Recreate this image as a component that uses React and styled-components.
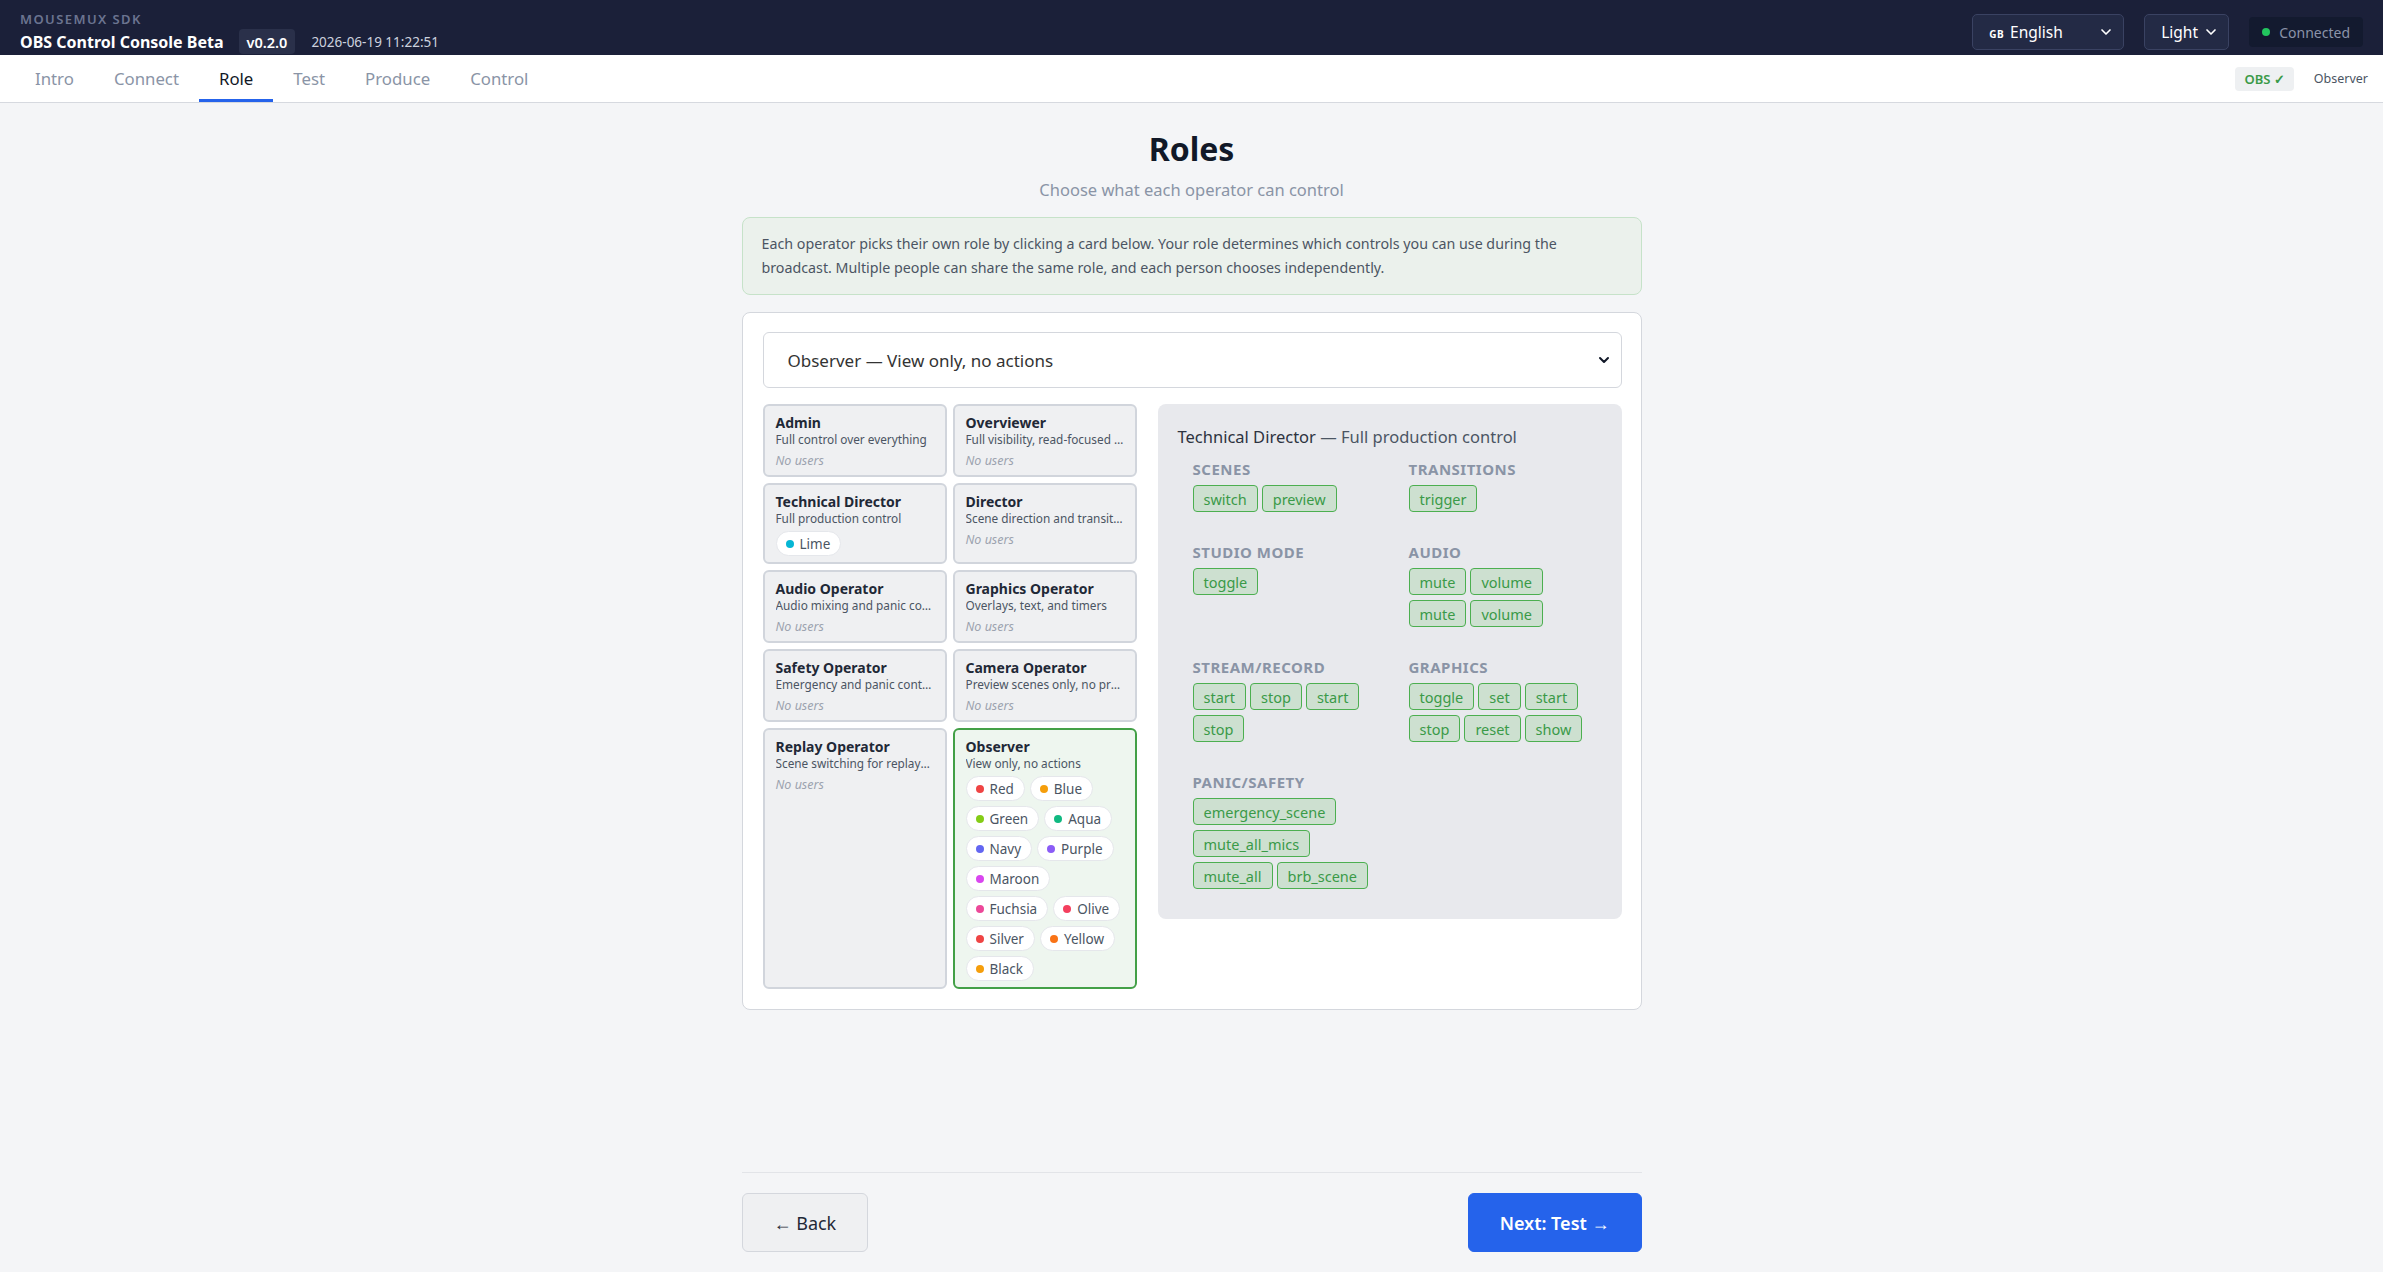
import React from "react";
import styled, { createGlobalStyle } from "styled-components";
import { ChevronDown } from "lucide-react";

const GlobalStyle = createGlobalStyle`
  html, body {
    margin: 0;
    padding: 0;
    background: #f4f5f7;
    font-family: "Noto Sans", "Open Sans", sans-serif;
    color: #1f2937;
  }
  * { box-sizing: border-box; }
`;

const Page = styled.div`
  min-height: 100vh;
  display: flex;
  flex-direction: column;
`;

const Header = styled.header`
  height: 55px;
  background: #1b2039;
  display: flex;
  justify-content: space-between;
  align-items: flex-start;
  padding: 10px 20px 0 20px;
`;

const Brand = styled.div`
  display: flex;
  flex-direction: column;
`;

const SdkLabel = styled.div`
  font-size: 13px;
  line-height: 18px;
  font-weight: 600;
  letter-spacing: 1.4px;
  color: #6b7490;
`;

const TitleRow = styled.div`
  display: flex;
  align-items: center;
  height: 27px;
`;

const AppTitle = styled.div`
  font-size: 16px;
  font-weight: 700;
  color: #ffffff;
`;

const Version = styled.span`
  margin-left: 15px;
  height: 25px;
  padding: 0 8px;
  display: flex;
  align-items: center;
  background: #2a304a;
  border-radius: 4px;
  color: #ffffff;
  font-size: 14.5px;
  font-weight: 600;
`;

const Clock = styled.span`
  margin-left: 16px;
  font-size: 13.5px;
  color: #cdd2df;
`;

const HeaderRight = styled.div`
  display: flex;
  align-items: center;
  gap: 20px;
  margin-top: 4px;
`;

const DarkSelect = styled.button`
  height: 36px;
  width: ${(p) => p.$w}px;
  display: flex;
  align-items: center;
  justify-content: space-between;
  padding: 0 9px 0 16px;
  background: #232a45;
  border: 1px solid #3a4262;
  border-radius: 5px;
  color: #ffffff;
  font-family: inherit;
  font-size: 15.5px;
`;

const Flag = styled.span`
  font-size: 10px;
  font-weight: 700;
  margin-right: 6px;
  letter-spacing: 0.5px;
`;

const Status = styled.div`
  height: 30px;
  display: flex;
  align-items: center;
  gap: 9px;
  padding: 0 13px;
  background: #131a2f;
  border-radius: 4px;
  color: #8b93a8;
  font-size: 14px;
`;

const Dot = styled.span`
  width: ${(p) => p.$size || 8}px;
  height: ${(p) => p.$size || 8}px;
  border-radius: 50%;
  background: ${(p) => p.$color};
  flex-shrink: 0;
`;

const TabBar = styled.nav`
  height: 48px;
  background: #ffffff;
  border-bottom: 1px solid #d6d9df;
  display: flex;
  justify-content: space-between;
  align-items: stretch;
  padding: 0 15px;
`;

const Tabs = styled.div`
  display: flex;
`;

const Tab = styled.div`
  padding: 0 20px;
  display: flex;
  align-items: center;
  font-size: 16.8px;
  color: ${(p) => (p.$active ? "#111827" : "#8a94a6")};
  border-bottom: 3px solid ${(p) => (p.$active ? "#2563eb" : "transparent")};
  border-top: 3px solid transparent;
`;

const TabMeta = styled.div`
  display: flex;
  align-items: center;
  gap: 20px;
`;

const ObsBadge = styled.span`
  height: 24px;
  padding: 0 9px;
  display: flex;
  align-items: center;
  background: #eef0f2;
  border-radius: 4px;
  color: #3a9a48;
  font-size: 13px;
  font-weight: 600;
`;

const UserRole = styled.span`
  font-size: 12.5px;
  color: #4b5563;
`;

const Main = styled.main`
  flex: 1;
  display: flex;
  flex-direction: column;
  padding: 26px 0 20px;
`;

const Container = styled.div`
  width: 900px;
  margin: 0 auto;
  flex: 1;
  display: flex;
  flex-direction: column;
`;

const Heading = styled.h1`
  margin: 0;
  text-align: center;
  font-size: 32px;
  line-height: 40px;
  font-weight: 700;
  color: #111827;
`;

const Subtitle = styled.p`
  margin: 10px 0 16px;
  text-align: center;
  font-size: 16.5px;
  line-height: 22px;
  color: #8a94a6;
`;

const InfoBox = styled.div`
  background: #ebf1ec;
  border: 1px solid #c6e2c9;
  border-radius: 8px;
  padding: 14px 34px 14px 19px;
  font-size: 14.25px;
  line-height: 24px;
  color: #4b5563;
`;

const Panel = styled.section`
  margin-top: 17px;
  background: #ffffff;
  border: 1px solid #d4d7dd;
  border-radius: 8px;
  padding: 19px 19px 20px 20px;
`;

const SelectWrap = styled.div`
  position: relative;
  margin-bottom: 16px;
`;

const RoleSelect = styled.select`
  width: 100%;
  height: 56px;
  appearance: none;
  background: #ffffff;
  border: 1px solid #d4d7dd;
  border-radius: 6px;
  padding: 0 40px 0 24px;
  font-family: inherit;
  font-size: 17px;
  color: #333333;
`;

const SelectIcon = styled.span`
  position: absolute;
  right: 10px;
  top: 50%;
  transform: translateY(-50%);
  display: flex;
  color: #111827;
  pointer-events: none;
`;

const Split = styled.div`
  display: grid;
  grid-template-columns: 374px 1fr;
  column-gap: 21px;
  align-items: start;
`;

const CardGrid = styled.div`
  display: grid;
  grid-template-columns: 184px 184px;
  gap: 6px;
`;

const RoleCard = styled.div`
  background: ${(p) => (p.$selected ? "#eef6ef" : "#eff0f2")};
  border: 2px solid ${(p) => (p.$selected ? "#43a047" : "#d1d5dc")};
  border-radius: 6px;
  padding: 8px 10px 6px 11px;
  min-width: 0;
`;

const CardTitle = styled.div`
  font-size: 14px;
  line-height: 17px;
  font-weight: 700;
  color: #1f2937;
`;

const CardDesc = styled.div`
  font-size: 11.8px;
  line-height: 17px;
  color: #4b5563;
  white-space: nowrap;
  overflow: hidden;
  text-overflow: ellipsis;
`;

const NoUsers = styled.div`
  margin-top: 4px;
  font-size: 12.5px;
  line-height: 17px;
  font-style: italic;
  color: #9ca3af;
`;

const Chips = styled.div`
  margin-top: 4px;
  display: flex;
  flex-wrap: wrap;
  gap: 5px;
`;

const Chip = styled.span`
  height: 25px;
  display: inline-flex;
  align-items: center;
  gap: 6px;
  padding: 0 10px 0 9px;
  background: #ffffff;
  border: 1px solid #e5e7eb;
  border-radius: 999px;
  font-size: 13.5px;
  color: #4b5563;
`;

const Perms = styled.div`
  background: #e8e9ed;
  border-radius: 8px;
  padding: 20px 20px 30px 20px;
`;

const PermsTitle = styled.div`
  font-size: 16.5px;
  line-height: 26px;
  color: #4b5563;
  margin-bottom: 9px;
  span {
    color: #2d3340;
  }
`;

const PermGrid = styled.div`
  display: grid;
  grid-template-columns: 180px 180px;
  column-gap: 36px;
  row-gap: 30px;
  margin-left: 15px;
`;

const Group = styled.div``;

const GroupTitle = styled.div`
  font-size: 15px;
  line-height: 20px;
  font-weight: 700;
  letter-spacing: 0.5px;
  color: #8a94a6;
  margin-bottom: 6px;
`;

const Actions = styled.div`
  display: flex;
  flex-wrap: wrap;
  gap: 5px 4px;
`;

const Action = styled.span`
  height: 27px;
  display: inline-flex;
  align-items: center;
  padding: 0 10px;
  background: #cde0d0;
  border: 1px solid #4caf50;
  border-radius: 4px;
  font-size: 14.5px;
  color: #3a9a48;
`;

const Footer = styled.div`
  margin-top: auto;
  border-top: 1px solid #e2e4e8;
  padding-top: 20px;
  display: flex;
  justify-content: space-between;
`;

const NavButton = styled.button`
  height: 59px;
  padding: 0 31px;
  border-radius: 6px;
  font-family: inherit;
  font-size: 18px;
  font-weight: ${(p) => (p.$primary ? 600 : 400)};
  background: ${(p) => (p.$primary ? "#2563eb" : "#eff0f2")};
  color: ${(p) => (p.$primary ? "#ffffff" : "#1f2937")};
  border: 1px solid ${(p) => (p.$primary ? "#2563eb" : "#d4d7dd")};
`;

const observers = [
  ["Red", "#ef4444"],
  ["Blue", "#f59e0b"],
  ["Green", "#84cc16"],
  ["Aqua", "#10b981"],
  ["Navy", "#6366f1"],
  ["Purple", "#8b5cf6"],
  ["Maroon", "#d946ef"],
  ["Fuchsia", "#ec4899"],
  ["Olive", "#f43f5e"],
  ["Silver", "#ef4444"],
  ["Yellow", "#f97316"],
  ["Black", "#f59e0b"],
];

const roles = [
  { name: "Admin", desc: "Full control over everything", users: [] },
  { name: "Overviewer", desc: "Full visibility, read-focused monitoring", users: [] },
  { name: "Technical Director", desc: "Full production control", users: [["Lime", "#06b6d4"]] },
  { name: "Director", desc: "Scene direction and transitions", users: [] },
  { name: "Audio Operator", desc: "Audio mixing and panic controls", users: [] },
  { name: "Graphics Operator", desc: "Overlays, text, and timers", users: [] },
  { name: "Safety Operator", desc: "Emergency and panic controls", users: [] },
  { name: "Camera Operator", desc: "Preview scenes only, no program", users: [] },
  { name: "Replay Operator", desc: "Scene switching for replays/highlights", users: [] },
  { name: "Observer", desc: "View only, no actions", users: observers, selected: true },
];

const permissions = [
  { title: "Scenes", actions: ["switch", "preview"] },
  { title: "Transitions", actions: ["trigger"] },
  { title: "Studio Mode", actions: ["toggle"] },
  { title: "Audio", actions: ["mute", "volume", "mute", "volume"] },
  { title: "Stream/Record", actions: ["start", "stop", "start", "stop"] },
  { title: "Graphics", actions: ["toggle", "set", "start", "stop", "reset", "show"] },
  { title: "Panic/Safety", actions: ["emergency_scene", "mute_all_mics", "mute_all", "brb_scene"] },
];

const tabs = ["Intro", "Connect", "Role", "Test", "Produce", "Control"];

const App = () => {
  return (
    <Page>
      <GlobalStyle />
      <Header>
        <Brand>
          <SdkLabel>MOUSEMUX SDK</SdkLabel>
          <TitleRow>
            <AppTitle>OBS Control Console Beta</AppTitle>
            <Version>v0.2.0</Version>
            <Clock>2026-06-19 11:22:51</Clock>
          </TitleRow>
        </Brand>
        <HeaderRight>
          <DarkSelect $w={152}>
            <span>
              <Flag>GB</Flag>English
            </span>
            <ChevronDown size={16} strokeWidth={2.5} />
          </DarkSelect>
          <DarkSelect $w={85}>
            <span>Light</span>
            <ChevronDown size={16} strokeWidth={2.5} />
          </DarkSelect>
          <Status>
            <Dot $color="#22c55e" />
            Connected
          </Status>
        </HeaderRight>
      </Header>

      <TabBar>
        <Tabs>
          {tabs.map((t) => (
            <Tab key={t} $active={t === "Role"}>
              {t}
            </Tab>
          ))}
        </Tabs>
        <TabMeta>
          <ObsBadge>OBS ✓</ObsBadge>
          <UserRole>Observer</UserRole>
        </TabMeta>
      </TabBar>

      <Main>
        <Container>
          <Heading>Roles</Heading>
          <Subtitle>Choose what each operator can control</Subtitle>
          <InfoBox>
            Each operator picks their own role by clicking a card below. Your role determines which controls you can
            use during the broadcast. Multiple people can share the same role, and each person chooses independently.
          </InfoBox>

          <Panel>
            <SelectWrap>
              <RoleSelect defaultValue="Observer">
                {roles.map((r) => (
                  <option key={r.name} value={r.name}>
                    {r.name} — {r.desc}
                  </option>
                ))}
              </RoleSelect>
              <SelectIcon>
                <ChevronDown size={16} strokeWidth={3} />
              </SelectIcon>
            </SelectWrap>

            <Split>
              <CardGrid>
                {roles.map((r) => (
                  <RoleCard key={r.name} $selected={r.selected}>
                    <CardTitle>{r.name}</CardTitle>
                    <CardDesc>{r.desc}</CardDesc>
                    {r.users.length === 0 ? (
                      <NoUsers>No users</NoUsers>
                    ) : (
                      <Chips>
                        {r.users.map(([n, c]) => (
                          <Chip key={n}>
                            <Dot $color={c} $size={8} />
                            {n}
                          </Chip>
                        ))}
                      </Chips>
                    )}
                  </RoleCard>
                ))}
              </CardGrid>

              <Perms>
                <PermsTitle>
                  <span>Technical Director</span> — Full production control
                </PermsTitle>
                <PermGrid>
                  {permissions.map((g) => (
                    <Group key={g.title}>
                      <GroupTitle>{g.title.toUpperCase()}</GroupTitle>
                      <Actions>
                        {g.actions.map((a, i) => (
                          <Action key={a + i}>{a}</Action>
                        ))}
                      </Actions>
                    </Group>
                  ))}
                </PermGrid>
              </Perms>
            </Split>
          </Panel>

          <Footer>
            <NavButton>← Back</NavButton>
            <NavButton $primary>Next: Test →</NavButton>
          </Footer>
        </Container>
      </Main>
    </Page>
  );
};

export default App;
